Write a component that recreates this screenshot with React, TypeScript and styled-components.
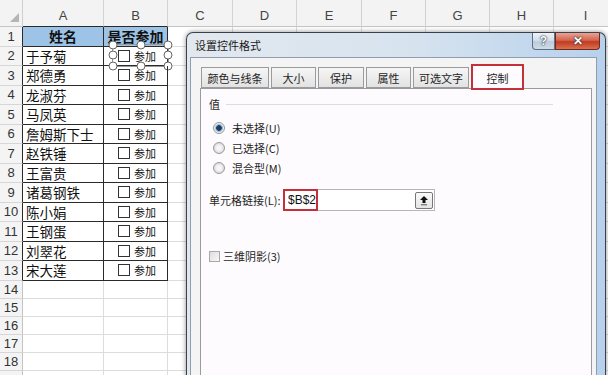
import { FC } from "react"
import styled, { createGlobalStyle } from "styled-components"

const GlobalStyle = createGlobalStyle`
  html, body {
    margin: 0;
    padding: 0;
    background: #fff;
  }
  body {
    font-family: "Noto Sans CJK SC", "Liberation Sans", sans-serif;
    overflow: hidden;
  }
`

const Page = styled.div`
  position: relative;
  width: 608px;
  height: 375px;
  overflow: hidden;
  background: #fff;
`

/* ---------- spreadsheet ---------- */

const Sheet = styled.div`
  display: grid;
  grid-template-columns: 23px 81px 64px 65px 64px 65px 64px 64px 64px 64px;
  grid-template-rows: 27px repeat(13, 19.5px) repeat(6, 18px);
`
const Corner = styled.div`
  box-sizing: border-box;
  background: #f3f3f3;
  border-right: 1px solid #cfcfcf;
  border-bottom: 1px solid #c4c4c4;
  display: flex;
  align-items: flex-end;
  justify-content: flex-end;
  padding: 0 3px 4px 0;
`
const ColHead = styled.div<{ $dark?: boolean }>`
  box-sizing: border-box;
  background: #f3f3f3;
  border-right: 1px solid #d2d2d2;
  border-bottom: 1px solid ${(p) => (p.$dark ? "#2a2a2a" : "#c4c4c4")};
  display: flex;
  align-items: flex-end;
  justify-content: center;
  padding-bottom: 3px;
  font-family: "Liberation Sans", sans-serif;
  font-size: 13px;
  color: #444;
`
const RowHead = styled.div<{ $dark?: boolean }>`
  box-sizing: border-box;
  background: #f4f4f4;
  border-right: 1px solid ${(p) => (p.$dark ? "#2a2a2a" : "#c4c4c4")};
  border-bottom: 1px solid #d6d6d6;
  display: flex;
  align-items: center;
  justify-content: center;
  font-family: "Liberation Sans", sans-serif;
  font-size: 13px;
  color: #333;
`
const Cell = styled.div`
  box-sizing: border-box;
  border-right: 1px solid #dcdcdc;
  border-bottom: 1px solid #dcdcdc;
`
const TableCell = styled.div`
  box-sizing: border-box;
  border-right: 1px solid #2a2a2a;
  border-bottom: 1px solid #2a2a2a;
  display: flex;
  align-items: center;
  color: #111;
`
const HeadCell = styled(TableCell)`
  background: #9dc3e6;
  justify-content: center;
  font-size: 14px;
  font-weight: 700;
`
const NameCell = styled(TableCell)`
  padding-left: 3px;
  font-size: 13.5px;
`
const CheckCell = styled(TableCell)`
  position: relative;
  padding-left: 14px;
  gap: 4px;
  font-size: 11px;
`
const Box = styled.span`
  box-sizing: border-box;
  width: 12px;
  height: 12px;
  border: 1px solid #333;
  background: #fff;
`
const Selection = styled.div`
  position: absolute;
  left: 8px;
  top: -3px;
  width: 57px;
  height: 23px;
  box-sizing: border-box;
  border: 1px solid #9a9a9a;
`
const Handle = styled.span`
  position: absolute;
  width: 9px;
  height: 9px;
  box-sizing: border-box;
  border: 1px solid #666;
  border-radius: 50%;
  background: #fff;
  transform: translate(-50%, -50%);
`

const COLS = ["A", "B", "C", "D", "E", "F", "G", "H", "I"]
const NAMES = [
  "于予菊",
  "郑德勇",
  "龙淑芬",
  "马凤英",
  "詹姆斯下士",
  "赵铁锤",
  "王富贵",
  "诸葛钢铁",
  "陈小娟",
  "王钢蛋",
  "刘翠花",
  "宋大莲",
]
const HANDLES = [
  [0, 0],
  [50, 0],
  [100, 0],
  [0, 50],
  [100, 50],
  [0, 100],
  [50, 100],
  [100, 100],
]

const EmptyCells: FC<{ from: number }> = ({ from }) => (
  <>
    {COLS.slice(from).map((c) => (
      <Cell key={c} />
    ))}
  </>
)

const Spreadsheet: FC = () => (
  <Sheet>
    <Corner>
      <svg width="9" height="9" viewBox="0 0 9 9">
        <path d="M9 0 L9 9 L0 9 Z" fill="#b5b5b5" />
      </svg>
    </Corner>
    {COLS.map((c, i) => (
      <ColHead key={c} $dark={i < 2}>
        {c}
      </ColHead>
    ))}

    <RowHead $dark>1</RowHead>
    <HeadCell>姓名</HeadCell>
    <HeadCell>是否参加</HeadCell>
    <EmptyCells from={2} />

    {NAMES.map((name, i) => (
      <FragmentRow key={name} n={i + 2} name={name} />
    ))}

    {[14, 15, 16, 17, 18, 19].map((n) => (
      <RowBlank key={n} n={n} />
    ))}
  </Sheet>
)

const FragmentRow: FC<{ n: number; name: string }> = ({ n, name }) => (
  <>
    <RowHead $dark>{n}</RowHead>
    <NameCell>{name}</NameCell>
    <CheckCell>
      <Box />
      参加
      {n === 2 && (
        <Selection>
          {HANDLES.map(([x, y]) => (
            <Handle key={`${x}-${y}`} style={{ left: `${x}%`, top: `${y}%` }} />
          ))}
        </Selection>
      )}
    </CheckCell>
    <EmptyCells from={2} />
  </>
)

const RowBlank: FC<{ n: number }> = ({ n }) => (
  <>
    <RowHead>{n}</RowHead>
    <EmptyCells from={0} />
  </>
)

/* ---------- dialog ---------- */

const Window = styled.div`
  position: absolute;
  left: 186px;
  top: 32px;
  width: 420px;
  height: 360px;
  box-sizing: border-box;
  border: 1px solid #38414c;
  border-bottom: none;
  border-radius: 7px 7px 0 0;
  background: linear-gradient(90deg, #e3e8ee 0%, #d6e3ef 55%, #b7d1ec 100%);
  padding: 0 8px 0 3px;
  display: flex;
  flex-direction: column;
  box-shadow: 0 0 5px rgba(0, 0, 0, 0.45);
  color: #1e1e1e;
`
const TitleBar = styled.div`
  height: 24px;
  display: flex;
  align-items: flex-start;
`
const Title = styled.div`
  margin-top: 5px;
  padding-left: 5px;
  font-size: 11px;
  line-height: 14px;
  color: #1a1a1a;
`
const Controls = styled.div`
  margin-left: auto;
  margin-right: -3px;
  display: flex;
`
const ControlButton = styled.div<{ $close?: boolean }>`
  box-sizing: border-box;
  width: ${(p) => (p.$close ? 45 : 23)}px;
  height: 17px;
  border: 1px solid ${(p) => (p.$close ? "#6e2a20" : "#5f6f82")};
  border-top: none;
  border-radius: ${(p) => (p.$close ? "0 0 4px 0" : "0 0 0 4px")};
  background: ${(p) =>
    p.$close
      ? "linear-gradient(#e9a493 0%, #d4644e 45%, #c23a22 55%, #d9714f 100%)"
      : "linear-gradient(#eef3f8 0%, #d4dfeb 45%, #bccbdc 55%, #cfdbe8 100%)"};
  display: flex;
  align-items: center;
  justify-content: center;
  font-family: "Liberation Sans", sans-serif;
  font-weight: 700;
  font-size: 12px;
  color: #fff;
  text-shadow: 0 0 2px #1d2838, 0 0 1px #1d2838;
`
const Client = styled.div`
  flex: 1;
  display: flex;
  flex-direction: column;
  border: 1px solid #8e9eb0;
  border-bottom: none;
  background: #f4f4f4;
  padding: 9px 4px 0 9px;
`
const TabRow = styled.div`
  height: 21px;
  display: flex;
  align-items: flex-end;
  gap: 2px;
  padding-left: 1px;
  position: relative;
  z-index: 1;
`
const Tab = styled.div<{ $w: number; $active?: boolean }>`
  box-sizing: border-box;
  width: ${(p) => p.$w}px;
  height: ${(p) => (p.$active ? 24 : 21)}px;
  margin-bottom: ${(p) => (p.$active ? -1 : 0)}px;
  margin-left: ${(p) => (p.$active ? 1 : 0)}px;
  border: 1px solid #9b9b9b;
  border-bottom: ${(p) => (p.$active ? "none" : "1px solid #9b9b9b")};
  background: ${(p) =>
    p.$active ? "#fdfbfd" : "linear-gradient(#f6f6f6, #e2e2e2)"};
  outline: ${(p) => (p.$active ? "2px solid #c3303a" : "none")};
  outline-offset: -1px;
  display: flex;
  align-items: center;
  justify-content: center;
  font-size: 11px;
`
const Panel = styled.div`
  flex: 1;
  border: 1px solid #9b9b9b;
  border-bottom: none;
  background: #fdfbfd;
  padding: 7px 8px 0 8px;
  display: flex;
  flex-direction: column;
  font-size: 11px;
`
const GroupHead = styled.div`
  height: 16px;
  display: flex;
  align-items: center;
  gap: 6px;
`
const GroupLine = styled.span`
  flex: 1;
  height: 1px;
  margin-right: 30px;
  background: #dcdcdc;
`
const Radios = styled.div`
  margin-top: 6px;
  display: flex;
  flex-direction: column;
`
const RadioRow = styled.div`
  height: 20px;
  display: flex;
  align-items: center;
  gap: 7px;
  padding-left: 4px;
`
const Radio = styled.span<{ $checked?: boolean }>`
  box-sizing: border-box;
  width: 12px;
  height: 12px;
  border-radius: 50%;
  border: 1px solid #9a9a9a;
  background: ${(p) =>
    p.$checked
      ? "radial-gradient(circle, #1f3e60 0 2.5px, #7fa7cf 3px, #e6eef6 4.5px)"
      : "radial-gradient(circle, #f6f6f6 0 2px, #dcdcdc 5px)"};
`
const LinkRow = styled.div`
  margin-top: 11px;
  height: 22px;
  display: flex;
  align-items: center;
`
const LinkLabel = styled.span`
  width: 74px;
`
const LinkInput = styled.div`
  box-sizing: border-box;
  width: 152px;
  height: 22px;
  border: 1px solid #b5b7bd;
  background: #fff;
  display: flex;
  align-items: center;
`
const LinkValue = styled.span`
  box-sizing: border-box;
  width: 35px;
  height: 22px;
  margin: -1px 0 0 -1px;
  border: 2px solid #c3303a;
  display: flex;
  align-items: center;
  padding-left: 3px;
  font-family: "Liberation Sans", sans-serif;
  font-size: 12px;
  color: #111;
`
const CollapseButton = styled.span`
  box-sizing: border-box;
  margin-left: auto;
  margin-right: 1px;
  width: 18px;
  height: 17px;
  border: 1px solid #777;
  border-radius: 2px;
  background: linear-gradient(#fafafa, #e4e4e4);
  display: flex;
  align-items: center;
  justify-content: center;
`
const ShadowRow = styled.div`
  margin-top: 37px;
  height: 16px;
  display: flex;
  align-items: center;
  gap: 3px;
`
const DimBox = styled.span`
  box-sizing: border-box;
  width: 11px;
  height: 11px;
  border: 1px solid #a9a9a9;
  background: linear-gradient(135deg, #dedede, #f7f7f7);
`

const TABS = [
  { label: "颜色与线条", w: 68 },
  { label: "大小", w: 45 },
  { label: "保护", w: 46 },
  { label: "属性", w: 45 },
  { label: "可选文字", w: 56 },
  { label: "控制", w: 51, active: true },
]

const RADIOS = ["未选择(U)", "已选择(C)", "混合型(M)"]

const FormatDialog: FC = () => (
  <Window>
    <TitleBar>
      <Title>设置控件格式</Title>
      <Controls>
        <ControlButton>?</ControlButton>
        <ControlButton $close>✕</ControlButton>
      </Controls>
    </TitleBar>
    <Client>
      <TabRow>
        {TABS.map((t) => (
          <Tab key={t.label} $w={t.w} $active={t.active}>
            {t.label}
          </Tab>
        ))}
      </TabRow>
      <Panel>
        <GroupHead>
          值
          <GroupLine />
        </GroupHead>
        <Radios>
          {RADIOS.map((r, i) => (
            <RadioRow key={r}>
              <Radio $checked={i === 0} />
              {r}
            </RadioRow>
          ))}
        </Radios>
        <LinkRow>
          <LinkLabel>单元格链接(L):</LinkLabel>
          <LinkInput>
            <LinkValue>$B$2</LinkValue>
            <CollapseButton>
              <svg width="10" height="11" viewBox="0 0 10 11">
                <path d="M5 1 L9 5 L6.5 5 L6.5 8 L3.5 8 L3.5 5 L1 5 Z" fill="#111" />
                <rect x="2" y="9.3" width="6" height="1" fill="#555" />
              </svg>
            </CollapseButton>
          </LinkInput>
        </LinkRow>
        <ShadowRow>
          <DimBox />
          三维阴影(3)
        </ShadowRow>
      </Panel>
    </Client>
  </Window>
)

const App: FC = () => (
  <Page>
    <GlobalStyle />
    <Spreadsheet />
    <FormatDialog />
  </Page>
)

export default App
